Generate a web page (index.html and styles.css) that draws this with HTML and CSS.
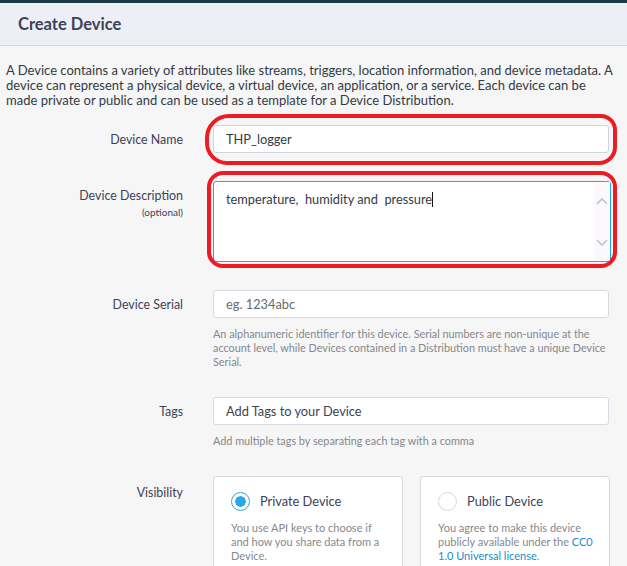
FILE: index.html
```html
<!DOCTYPE html>
<html lang="en">
<head>
  <meta charset="UTF-8" />
  <title>Create Device</title>
  <link rel="stylesheet" href="styles.css">
</head>
<body>
  <div class="topbar"></div>
  <div class="modal-header">
    <h2>Create Device</h2>
  </div>

  <div class="modal-body">
    <p class="intro">A Device contains a variety of attributes like streams, triggers, location information, and device metadata. A device can represent a physical device, a virtual device, an application, or a service. Each device can be made private or public and can be used as a template for a Device Distribution.</p>

    <form class="form">
      <div class="row">
        <label class="label">Device Name</label>
        <div class="control">
          <input type="text" class="input value" value="THP_logger">
        </div>
      </div>

      <div class="row">
        <label class="label">Device Description<small>(optional)</small></label>
        <div class="control">
          <div class="textarea">
            <div class="textarea-text">temperature,&nbsp; humidity and&nbsp; pressure<span class="caret"></span></div>
            <div class="scroller">
              <svg width="12" height="8" viewBox="0 0 12 8"><path d="M1 7 L6 2 L11 7" fill="none" stroke="#c4c4c8" stroke-width="1.6"/></svg>
              <svg width="12" height="8" viewBox="0 0 12 8"><path d="M1 1 L6 6 L11 1" fill="none" stroke="#c4c4c8" stroke-width="1.6"/></svg>
            </div>
          </div>
        </div>
      </div>

      <div class="row">
        <label class="label">Device Serial</label>
        <div class="control">
          <input type="text" class="input serial" placeholder="eg. 1234abc">
          <p class="help">An alphanumeric identifier for this device. Serial numbers are non-unique at the account level, while Devices contained in a Distribution must have a unique Device Serial.</p>
        </div>
      </div>

      <div class="row">
        <label class="label">Tags</label>
        <div class="control">
          <input type="text" class="input tags" placeholder="Add Tags to your Device">
          <p class="help">Add multiple tags by separating each tag with a comma</p>
        </div>
      </div>

      <div class="row">
        <label class="label vis">Visibility</label>
        <div class="control cards">
          <div class="card">
            <div class="card-title"><span class="radio checked"></span>Private Device</div>
            <p class="card-text">You use API keys to choose if and how you share data from a Device.</p>
          </div>
          <div class="card">
            <div class="card-title"><span class="radio"></span>Public Device</div>
            <p class="card-text">You agree to make this device publicly available under the <a href="#">CC0 1.0 Universal license</a>.</p>
          </div>
        </div>
      </div>

      <div class="mark mark-name"></div>
      <div class="mark mark-desc"></div>
    </form>
  </div>
</body>
</html>
```

FILE: styles.css
```css
html, body {
  height: 566px;
  overflow: hidden;
}
body {
  margin: 0;
  font-family: Lato, 'Open Sans', sans-serif;
  background: #f6f6f6;
  color: #333a45;
}
.topbar {
  height: 3px;
  background: #1d3944;
}
.modal-header {
  height: 42px;
  background: #eeeef6;
  border-bottom: 1px solid #d9d9de;
  padding: 0 18px;
  display: flex;
  align-items: center;
}
.modal-header h2 {
  margin: 0;
  font-size: 16.5px;
  font-weight: 700;
  color: #3c4257;
}
.modal-body {
  padding: 17px 12px 0 6px;
}
.intro {
  margin: 0 0 17px 0;
  font-size: 13px;
  line-height: 15px;
  color: #333a45;
}
.form {
  position: relative;
}
.row {
  display: grid;
  grid-template-columns: 177px 398px;
  column-gap: 30px;
  margin-bottom: 28px;
}
.label {
  text-align: right;
  font-size: 12.4px;
  line-height: 16px;
  padding-top: 7px;
  color: #3c4257;
}
.label small {
  display: block;
  font-size: 10px;
  line-height: 16px;
}
.label.vis {
  padding-top: 9px;
}
.input {
  box-sizing: border-box;
  width: 396px;
  height: 28px;
  border: 1px solid #d5dbe2;
  border-radius: 3px;
  background: #fff;
  padding: 0 12px;
  font-family: inherit;
  font-size: 12.8px;
  color: #333a45;
  outline: none;
}
.input.value {
  border-color: #cdd5de;
}
.serial::placeholder {
  color: #666a70;
}
.tags::placeholder {
  color: #3e4350;
}
.textarea {
  box-sizing: border-box;
  width: 398px;
  height: 81px;
  border: 1px solid #2aa7e8;
  border-radius: 3px;
  background: #fff;
  display: flex;
}
.textarea-text {
  flex: 1;
  padding: 9px 12px;
  font-size: 12.8px;
  line-height: 16px;
  color: #333a45;
}
.caret {
  display: inline-block;
  width: 1px;
  height: 15px;
  background: #111;
  vertical-align: -3px;
}
.scroller {
  width: 16px;
  background: #fbf9fc;
  display: flex;
  flex-direction: column;
  justify-content: space-between;
  align-items: center;
  padding: 15px 0 14px 0;
}
.help {
  margin: 9px 0 0 0;
  font-size: 10.85px;
  line-height: 14px;
  color: #85878c;
}
.cards {
  display: flex;
  gap: 17px;
}
.card {
  box-sizing: border-box;
  width: 190px;
  height: 100px;
  background: #fff;
  border: 1px solid #d9d9e0;
  border-radius: 3px;
  padding: 14px 10px 14px 17px;
}
.card-title {
  display: flex;
  align-items: center;
  font-size: 12.8px;
  color: #3c4257;
  height: 20px;
}
.radio {
  box-sizing: border-box;
  width: 19px;
  height: 19px;
  border-radius: 50%;
  border: 1px solid #d8d8de;
  margin-right: 10px;
  background: #fff;
}
.radio.checked {
  border: 1.5px solid #2aa7e8;
  background: radial-gradient(circle, #2aa7e8 0, #2aa7e8 5px, #fff 5.5px);
}
.card-text {
  margin: 10px 0 0 0;
  font-size: 11px;
  line-height: 14px;
  color: #86888e;
}
.card-text a {
  color: #1a8ccb;
  text-decoration: none;
}
.mark {
  position: absolute;
  border: 4px solid #ed1c24;
  pointer-events: none;
}
.mark-name {
  left: 199px;
  top: -11px;
  width: 404px;
  height: 43px;
  border-radius: 24px 16px 18px 22px;
}
.mark-desc {
  left: 201px;
  top: 46px;
  width: 402px;
  height: 89px;
  border-radius: 16px;
}
```
